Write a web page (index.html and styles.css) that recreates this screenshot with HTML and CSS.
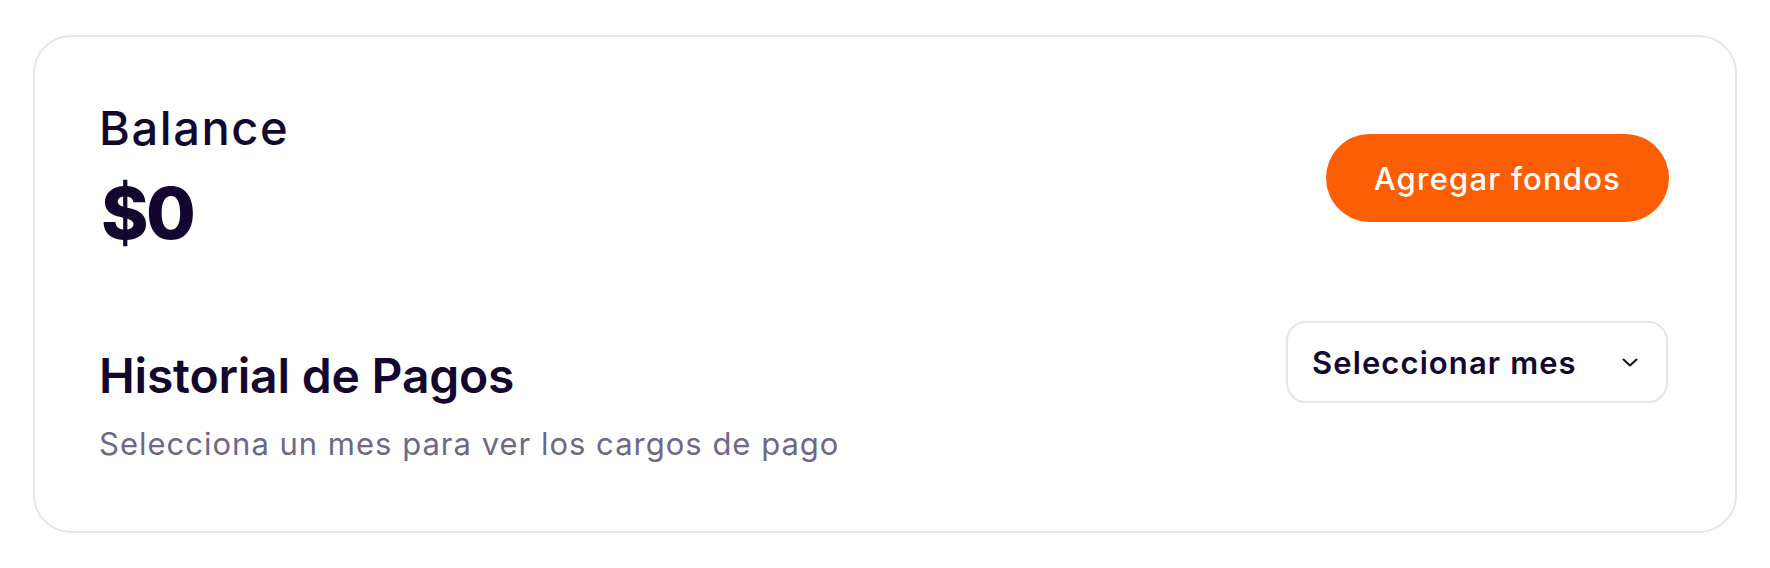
FILE: index.html
```html
<!DOCTYPE html>
<html lang="es">
<head>
<meta charset="utf-8">
<title>Balance</title>
<link rel="stylesheet" href="styles.css">
</head>
<body>
  <main class="page">
    <section class="card">
      <div class="row row-top">
        <div class="balance">
          <h2 class="balance-label">Balance</h2>
          <div class="balance-amount">$0</div>
        </div>
        <button class="btn-primary" type="button">Agregar fondos</button>
      </div>
      <div class="row row-history">
        <div class="history-text">
          <h2 class="history-title">Historial de Pagos</h2>
          <p class="history-sub">Selecciona un mes para ver los cargos de pago</p>
        </div>
        <button class="select" type="button">
          <span class="select-label">Seleccionar mes</span>
          <svg class="chevron" width="16" height="9" viewBox="0 0 16 9" aria-hidden="true">
            <path d="M1.5 1.5 L8 7.5 L14.5 1.5" fill="none" stroke="#140a2e" stroke-width="2" stroke-linecap="round" stroke-linejoin="round"/>
          </svg>
        </button>
      </div>
    </section>
  </main>
</body>
</html>
```
FILE: styles.css
```css
* { box-sizing: border-box; }
html, body { margin: 0; padding: 0; background: #ffffff; }
body {
  font-family: Inter, "Noto Sans", "Liberation Sans", sans-serif;
  color: #14072f;
}
.page {
  padding: 35px 33px;
}
.card {
  border: 2px solid #e6e5ec;
  border-radius: 38px;
  padding: 63px 64px 64px 64px;
  background: #fff;
}
.row {
  display: flex;
  justify-content: space-between;
}
.row-top { align-items: center; }
.row-history {
  align-items: flex-start;
  margin-top: 65px;
}
.balance-label {
  margin: 0;
  font-size: 47px;
  line-height: 56px;
  font-weight: 500;
  letter-spacing: 1.6px;
}
.balance-amount {
  margin-top: 14px;
  padding-left: 2px;
  font-size: 72px;
  line-height: 86px;
  font-weight: 800;
  letter-spacing: -2.5px;
}
.btn-primary {
  height: 88px;
  padding: 0 48px;
  border: 0;
  border-radius: 44px;
  background: #fc5f03;
  color: #fff;
  font-family: inherit;
  font-size: 31px;
  font-weight: 500;
  letter-spacing: 1.2px;
  margin-right: 2px;
}
.history-title {
  margin: 0;
  font-size: 48px;
  line-height: 58px;
  font-weight: 600;
  letter-spacing: -0.2px;
}
.history-text { padding-top: 26px; }
.history-sub {
  margin: 15px 0 0;
  font-size: 31px;
  line-height: 47px;
  font-weight: 400;
  color: #6f6787;
  letter-spacing: 1px;
}
.select {
  width: 382px;
  height: 82px;
  margin-right: 3px;
  display: flex;
  align-items: center;
  justify-content: space-between;
  padding: 0 28px 0 24px;
  background: #fff;
  border: 2px solid #e6e5ec;
  border-radius: 20px;
  font-family: inherit;
  color: #14072f;
}
.select-label {
  font-size: 31px;
  font-weight: 600;
  letter-spacing: 1.1px;
}
.chevron { display: block; }
```
